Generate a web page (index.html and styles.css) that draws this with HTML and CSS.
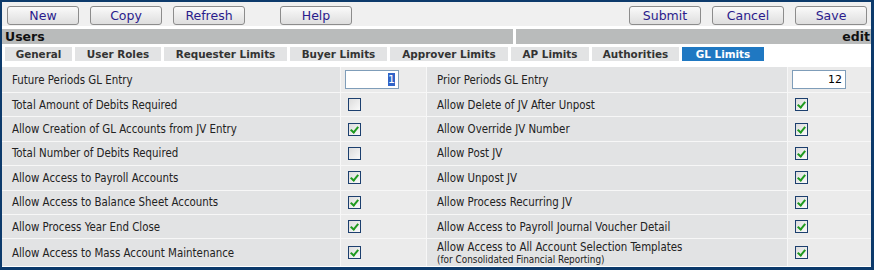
FILE: index.html
```html
<!DOCTYPE html>
<html lang="en">
<head>
    <meta charset="UTF-8">
    <title>Users - GL Limits</title>
    <link rel="stylesheet" href="styles.css">
</head>
<body>
    <div class="window">
        <div class="toolbar">
            <div class="btn-group">
                <button class="btn">New</button>
                <button class="btn">Copy</button>
                <button class="btn">Refresh</button>
                <button class="btn btn-help">Help</button>
            </div>
            <div class="btn-group">
                <button class="btn">Submit</button>
                <button class="btn">Cancel</button>
                <button class="btn">Save</button>
            </div>
        </div>

        <div class="title-bar">
            <div class="title-main">Users</div>
            <div class="title-side">edit</div>
        </div>

        <div class="tabs">
            <div class="tab">General</div>
            <div class="tab">User Roles</div>
            <div class="tab">Requester Limits</div>
            <div class="tab">Buyer Limits</div>
            <div class="tab">Approver Limits</div>
            <div class="tab">AP Limits</div>
            <div class="tab">Authorities</div>
            <div class="tab tab-active">GL Limits</div>
        </div>

        <div class="grid">
            <div class="label">Future Periods GL Entry</div>
            <div class="ctrl"><div class="field"><span class="sel">1</span></div></div>
            <div class="label">Prior Periods GL Entry</div>
            <div class="ctrl"><div class="field">12</div></div>

            <div class="label">Total Amount of Debits Required</div>
            <div class="ctrl"><span class="cb"></span></div>
            <div class="label">Allow Delete of JV After Unpost</div>
            <div class="ctrl"><span class="cb checked"></span></div>

            <div class="label">Allow Creation of GL Accounts from JV Entry</div>
            <div class="ctrl"><span class="cb checked"></span></div>
            <div class="label">Allow Override JV Number</div>
            <div class="ctrl"><span class="cb checked"></span></div>

            <div class="label">Total Number of Debits Required</div>
            <div class="ctrl"><span class="cb"></span></div>
            <div class="label">Allow Post JV</div>
            <div class="ctrl"><span class="cb checked"></span></div>

            <div class="label">Allow Access to Payroll Accounts</div>
            <div class="ctrl"><span class="cb checked"></span></div>
            <div class="label">Allow Unpost JV</div>
            <div class="ctrl"><span class="cb checked"></span></div>

            <div class="label">Allow Access to Balance Sheet Accounts</div>
            <div class="ctrl"><span class="cb checked"></span></div>
            <div class="label">Allow Process Recurring JV</div>
            <div class="ctrl"><span class="cb checked"></span></div>

            <div class="label">Allow Process Year End Close</div>
            <div class="ctrl"><span class="cb checked"></span></div>
            <div class="label">Allow Access to Payroll Journal Voucher Detail</div>
            <div class="ctrl"><span class="cb checked"></span></div>

            <div class="label">Allow Access to Mass Account Maintenance</div>
            <div class="ctrl"><span class="cb checked"></span></div>
            <div class="label">Allow Access to All Account Selection Templates<small>(for Consolidated Financial Reporting)</small></div>
            <div class="ctrl"><span class="cb checked"></span></div>
        </div>
    </div>
</body>
</html>
```

FILE: styles.css
```css
:root {
    --frame-color: #0c3a6b;
    --bar-color: #b9bbbb;
    --tab-color: #e2e3e4;
    --tab-active: #1f78c2;
    --label-bg: #e2e3e4;
    --ctrl-bg: #ebebeb;
    --btn-text: #2a1b8c;
}

* {
    box-sizing: border-box;
    margin: 0;
    padding: 0;
}

body {
    font-family: 'DejaVu Sans', Verdana, sans-serif;
    background-color: #ffffff;
    color: #222;
}

.window {
    width: 874px;
    height: 270px;
    border-style: solid;
    border-color: var(--frame-color);
    border-width: 2px 3px 3px 2px;
    background-color: #ffffff;
    overflow: hidden;
}

/* Toolbar */
.toolbar {
    display: flex;
    justify-content: space-between;
    align-items: flex-end;
    height: 24px;
    padding: 0 4px 1px 5px;
    background-color: #f0f0f0;
    margin-bottom: 3px;
}

.btn-group {
    display: flex;
    gap: 11px;
}

.btn {
    width: 72px;
    height: 19px;
    border: 1px solid #8c8c8c;
    border-radius: 3px;
    background: linear-gradient(#fafafa, #dedede);
    color: var(--btn-text);
    font-family: 'DejaVu Sans', Verdana, sans-serif;
    font-size: 12.5px;
    line-height: 16px;
    cursor: pointer;
}

.btn-help {
    margin-left: 24px;
}

/* Title bar */
.title-bar {
    display: flex;
    gap: 3px;
    height: 15px;
    font-weight: bold;
    font-size: 12.5px;
    line-height: 15px;
    color: #111;
}

.title-main {
    width: 511px;
    background-color: var(--bar-color);
    padding-left: 3px;
}

.title-side {
    flex: 1;
    background-color: var(--bar-color);
    text-align: right;
    padding-right: 1px;
}

/* Tabs */
.tabs {
    display: flex;
    gap: 3px;
    margin-top: 3px;
    padding-left: 3px;
}

.tab {
    height: 14px;
    background-color: var(--tab-color);
    color: #333;
    font-size: 10.4px;
    font-weight: bold;
    line-height: 14px;
    text-align: center;
}

.tab:nth-child(1) { width: 67px; }
.tab:nth-child(2) { width: 86px; }
.tab:nth-child(3) { width: 123px; }
.tab:nth-child(4) { width: 97px; }
.tab:nth-child(5) { width: 118px; }
.tab:nth-child(6) { width: 78px; }
.tab:nth-child(7) { width: 87px; }
.tab:nth-child(8) { width: 82px; }

.tab-active {
    background-color: var(--tab-active);
    color: #ffffff;
}

/* Settings grid */
.grid {
    display: grid;
    grid-template-columns: 338px 85px 360px 1fr;
    grid-template-rows: 25px repeat(6, 23.4px) 27px;
    gap: 1px 1px;
    margin-top: 6px;
    background-color: #f7f7f7;
}

.label {
    display: flex;
    flex-direction: column;
    justify-content: center;
    background-color: var(--label-bg);
    padding-left: 10px;
    font-family: 'DejaVu Sans Condensed', 'DejaVu Sans', sans-serif;
    font-size: 11.4px;
    color: #222;
}

.label small {
    font-size: 9.9px;
    line-height: 11px;
}

.ctrl {
    display: flex;
    align-items: center;
    background-color: var(--ctrl-bg);
    padding-left: 4px;
}

.field {
    width: 54px;
    height: 19px;
    border: 1px solid #7f9db9;
    background-color: #ffffff;
    font-size: 11px;
    line-height: 17px;
    text-align: right;
    padding-right: 3px;
    color: #000;
}

.sel {
    background-color: #3064c8;
    color: #ffffff;
}

.cb {
    display: block;
    width: 13px;
    height: 13px;
    margin-left: 3px;
    border: 1px solid #1c3f6e;
    background: linear-gradient(135deg, #dcdcdc, #fafafa);
    position: relative;
}

.cb.checked::after {
    content: "";
    position: absolute;
    left: 3px;
    top: 1px;
    width: 3px;
    height: 6px;
    border: solid #1f9a1f;
    border-width: 0 2px 2px 0;
    transform: rotate(40deg);
}
```
